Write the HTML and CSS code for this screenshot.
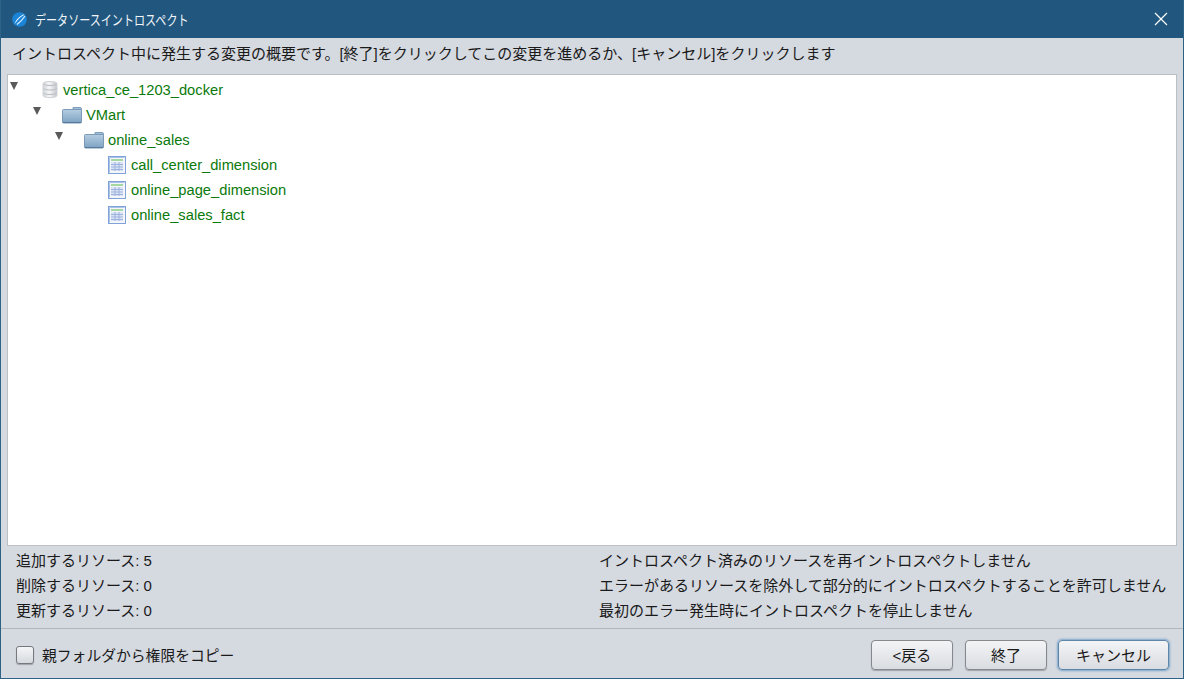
FILE: index.html
```html
<!DOCTYPE html>
<html lang="ja">
<head>
<meta charset="utf-8">
<title>データソースイントロスペクト</title>
<link rel="stylesheet" href="styles.css">
</head>
<body>
<div class="window">
  <header class="titlebar">
    <svg class="app-icon" width="15" height="15" viewBox="0 0 15 15">
      <circle cx="7.5" cy="7.5" r="7.3" fill="#1b84d6"/>
      <path d="M2.5 12 C4 7.5 8 3.5 12.5 2.2 C11.5 3.5 10.5 4.2 9.5 4.6 C7.5 6 5 9 2.5 12 Z" fill="#ffffff"/>
      <path d="M5 12.5 C7.5 10.5 10.5 8 13 4" stroke="#d6ecfb" stroke-width="1.2" fill="none"/>
    </svg>
    <span class="title">データソースイントロスペクト</span>
    <svg class="close" width="14" height="14" viewBox="0 0 14 14">
      <path d="M1 1 L13 13 M13 1 L1 13" stroke="#ffffff" stroke-width="1.2" fill="none"/>
    </svg>
  </header>
  <p class="message">イントロスペクト中に発生する変更の概要です。[終了]をクリックしてこの変更を進めるか、[キャンセル]をクリックします</p>
  <div class="tree">
    <div class="row level0">
      <span class="caret"></span>
      <svg class="icon-db" width="16" height="19" viewBox="0 0 16 19">
        <defs><linearGradient id="db" x1="0" x2="1" y1="0" y2="0"><stop offset="0" stop-color="#d2d5d9"/><stop offset=".45" stop-color="#f5f6f7"/><stop offset="1" stop-color="#c3c6cb"/></linearGradient></defs>
        <path d="M1 3.5 C1 .8 15 .8 15 3.5 V15.5 C15 18.4 1 18.4 1 15.5 Z" fill="url(#db)" stroke="#d0d3d7"/>
        <path d="M1.5 4 C3 6 13 6 14.5 4 M1.5 8.5 C3 10.5 13 10.5 14.5 8.5 M1.5 13 C3 15 13 15 14.5 13" stroke="#b9bcc1" fill="none"/>
      </svg>
      <span class="label">vertica_ce_1203_docker</span>
    </div>
    <div class="row level1">
      <span class="caret"></span>
      <svg class="icon-folder" width="20" height="18" viewBox="0 0 20 18">
        <use href="#folder-shape"/>
      </svg>
      <span class="label">VMart</span>
    </div>
    <div class="row level2">
      <span class="caret"></span>
      <svg class="icon-folder" width="20" height="18" viewBox="0 0 20 18">
        <defs>
          <linearGradient id="fold" x1="0" x2="0" y1="0" y2="1"><stop offset="0" stop-color="#b4cde2"/><stop offset="1" stop-color="#7ea2c2"/></linearGradient>
          <g id="folder-shape">
            <path d="M11 1.5 H18 Q19.5 1.5 19.5 3 V5 H11 Z" fill="#9fbdd6" stroke="#7f9fbc"/>
            <rect x="0.5" y="3.5" width="19" height="13.5" rx="1" fill="url(#fold)" stroke="#7c99b5"/>
            <path d="M1 16.5 H19" stroke="#557a9b"/>
          </g>
        </defs>
        <use href="#folder-shape"/>
      </svg>
      <span class="label">online_sales</span>
    </div>
    <div class="row level3">
      <svg class="icon-table" width="18" height="18" viewBox="0 0 18 18"><use href="#table-shape"/></svg>
      <span class="label">call_center_dimension</span>
    </div>
    <div class="row level3">
      <svg class="icon-table" width="18" height="18" viewBox="0 0 18 18"><use href="#table-shape"/></svg>
      <span class="label">online_page_dimension</span>
    </div>
    <div class="row level3">
      <svg class="icon-table" width="18" height="18" viewBox="0 0 18 18">
        <defs>
          <g id="table-shape">
            <rect x="0.5" y="0.5" width="17" height="17" fill="#f3f5fa" stroke="#7fa3d9"/>
            <path d="M1.5 1.5 H16.5 M1.5 1.5 V16.5" stroke="#a9c2e8"/>
            <rect x="3" y="3" width="12" height="2" fill="#a5d8a0"/>
            <rect x="3" y="6" width="12" height="9" fill="#dbe4f5"/>
            <path d="M3 8.5 H15 M3 11 H15 M3 13.5 H15 M7 6 V15 M11 6 V15" stroke="#9db3de" fill="none"/>
          </g>
        </defs>
        <use href="#table-shape"/>
      </svg>
      <span class="label">online_sales_fact</span>
    </div>
  </div>
  <div class="stats">
    <div class="stat">追加するリソース: 5</div>
    <div class="stat">イントロスペクト済みのリソースを再イントロスペクトしません</div>
    <div class="stat">削除するリソース: 0</div>
    <div class="stat">エラーがあるリソースを除外して部分的にイントロスペクトすることを許可しません</div>
    <div class="stat">更新するリソース: 0</div>
    <div class="stat">最初のエラー発生時にイントロスペクトを停止しません</div>
  </div>
  <footer class="footer">
    <label class="check"><span class="box"></span>親フォルダから権限をコピー</label>
    <div class="buttons">
      <button class="btn back">&lt;戻る</button>
      <button class="btn finish">終了</button>
      <button class="btn cancel">キャンセル</button>
    </div>
  </footer>
</div>
</body>
</html>
```
FILE: styles.css
```css
* { box-sizing: border-box; }
html, body { margin: 0; height: 100%; overflow: hidden; }
body {
  font-family: "Liberation Sans", "Noto Sans CJK JP", sans-serif;
  font-size: 15px;
  color: #1a1a1a;
}
.window {
  width: 1184px;
  height: 679px;
  display: flex;
  flex-direction: column;
  background: #d5d9e0;
  border: 1px solid #2f6287;
  border-top: 0;
}
.titlebar {
  height: 38px;
  flex: none;
  display: flex;
  align-items: center;
  background: #21577f;
  color: #f2f6fa;
  padding: 0 15px 0 11px;
}
.app-icon { flex: none; }
.title {
  margin-left: 8px;
  flex: 1;
  font-size: 14px;
  white-space: nowrap;
  transform: scaleX(0.79);
  transform-origin: left center;
}
.close { flex: none; }
.message {
  margin: 0;
  height: 36px;
  flex: none;
  padding: 0 0 0 11px;
  line-height: 31px;
  white-space: nowrap;
}
.tree {
  height: 472px;
  flex: none;
  margin: 0 6px;
  padding-top: 2px;
  background: #fff;
  border: 1px solid #bcbfc4;
  font-size: 14.7px;
}
.row {
  height: 25px;
  display: flex;
  align-items: center;
  color: #0b7a0b;
  white-space: nowrap;
}
.caret {
  width: 0;
  height: 0;
  flex: none;
  margin-top: -7px;
  border-left: 4.5px solid transparent;
  border-right: 4.5px solid transparent;
  border-top: 8px solid #5a5a5a;
}
.level0 { padding-left: 2px; }
.level0 .caret { margin-right: 24px; }
.level0 .label { margin-left: 5px; }
.level1 { padding-left: 25px; }
.level1 .caret { margin-right: 21px; }
.level2 { padding-left: 47px; }
.level2 .caret { margin-right: 21px; }
.level1 .label, .level2 .label { margin-left: 4px; }
.level3 { padding-left: 100px; }
.level3 .label { margin-left: 5px; }
.stats {
  height: 83px;
  flex: none;
  padding: 1px 0 0 15px;
  display: grid;
  grid-template-columns: 583px 1fr;
  grid-auto-rows: 25px;
  align-items: center;
  border-bottom: 1px solid #b2b6bc;
  white-space: nowrap;
}
.footer {
  flex: 1;
  display: flex;
  align-items: center;
  justify-content: space-between;
  padding: 2px 14px 0 15px;
}
.check { display: flex; align-items: center; font-size: 14.8px; }
.box {
  width: 18px;
  height: 18px;
  margin-right: 8px;
  border: 1px solid #75787d;
  border-radius: 3px;
  background: linear-gradient(#f4f5f7, #d6d9de);
  box-shadow: 0 1px 1px rgba(0,0,0,.25);
}
.buttons { display: flex; gap: 12px; }
.btn {
  height: 30px;
  padding: 0;
  font: inherit;
  color: #1a1a1a;
  border: 1px solid #85888c;
  border-radius: 4px;
  background: linear-gradient(#f3f4f6, #d9dce1);
  box-shadow: 0 1px 1px rgba(0,0,0,.25);
}
.back, .finish { width: 82px; }
.cancel {
  width: 111px;
  margin-left: -1px;
  border-color: #5f86a8;
  box-shadow: 0 0 2px 1px #7aa7cc;
}
```
